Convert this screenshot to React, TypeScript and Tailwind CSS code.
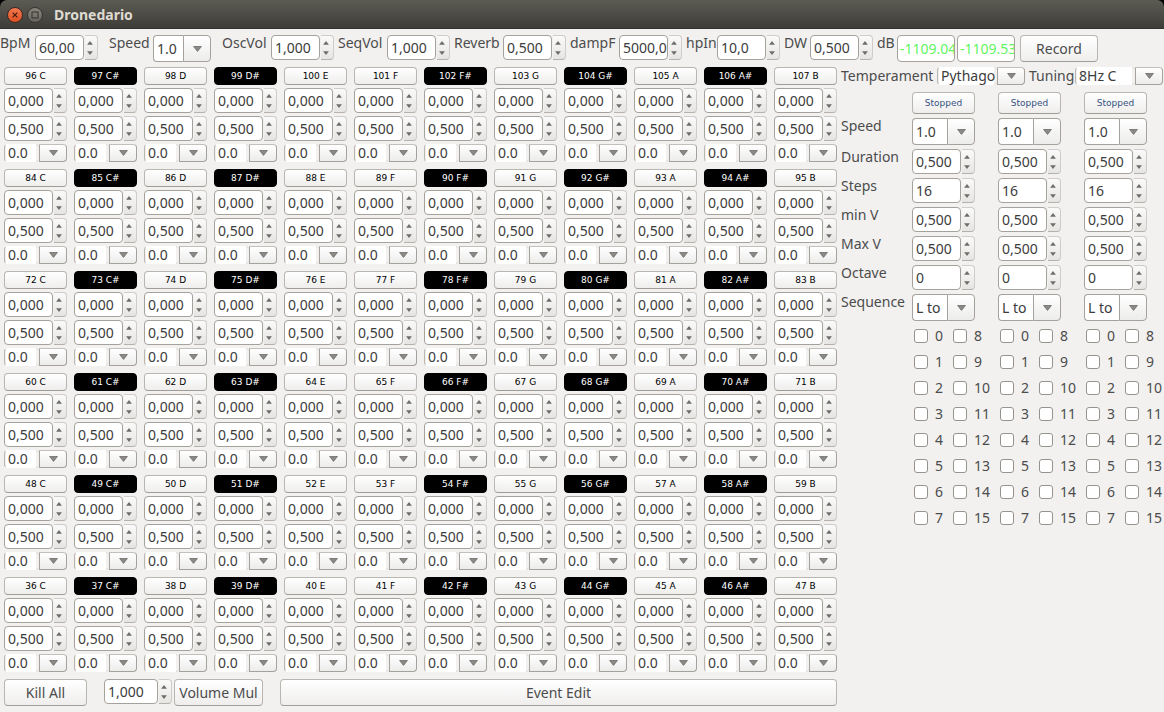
import React, { useId, useState } from "react";
import clsx from "clsx";

const NOTES = ["C", "C#", "D", "D#", "E", "F", "F#", "G", "G#", "A", "A#", "B"];
const OCTAVE_STARTS = [96, 84, 72, 60, 48, 36];
const TRACKS = [1, 2, 3];

function Arrow({ up = false }: { up?: boolean }) {
  return (
    <svg width="6" height="4" viewBox="0 0 6 4" aria-hidden="true">
      <path d={up ? "M3 0 5.9 3.8H0.1Z" : "M0.1 0.2H5.9L3 4Z"} fill="#6f6d6a" />
    </svg>
  );
}

type SpinProps = { value: string; label: string; id?: string; className?: string };

function Spin({ value, label, id, className = "w-full" }: SpinProps) {
  const [text, setText] = useState(value);
  const digits = value.includes(",") ? value.split(",")[1].length : 0;
  const step = digits === 3 ? 0.01 : 1;
  const move = (by: number) => {
    const next = Number(text.replace(",", ".")) + by;
    if (!Number.isNaN(next)) setText(next.toFixed(digits).replace(".", ","));
  };
  return (
    <div className={clsx("flex h-[25px]", className)}>
      <input
        id={id}
        aria-label={id ? undefined : label}
        value={text}
        onChange={(e) => setText(e.target.value)}
        className="h-full w-0 min-w-0 flex-1 rounded-[4px] border border-[#a5a19c] bg-white pl-[3px] text-[#3c3c3c] outline-none focus:border-[#f07746]"
      />
      <div className="ml-px flex w-[13px] shrink-0 flex-col rounded-r-[4px] border border-l-0 border-[#cfccc9] border-b-[#b5b1ad] bg-linear-to-b from-[#fafafa] to-[#e6e5e3]">
        <button type="button" aria-label={`Increase ${label}`} onClick={() => move(step)} className="flex flex-1 items-center justify-center pt-[2px] pr-[2px]">
          <Arrow up />
        </button>
        <button type="button" aria-label={`Decrease ${label}`} onClick={() => move(-step)} className="flex flex-1 items-center justify-center pr-[2px] pb-px">
          <Arrow />
        </button>
      </div>
    </div>
  );
}

type ComboProps = { options: string[]; label: string; id?: string; small?: boolean; className?: string };

function Combo({ options, label, id, small = false, className = "w-full" }: ComboProps) {
  return (
    <div className={clsx("grid", small ? "h-[18px]" : "h-[27px]", className)}>
      <div className="col-start-1 row-start-1 flex min-w-0">
        {small ? (
          <div className="flex min-w-0 flex-1 rounded-[4px] border border-[#b9b6b2] border-y-[#dedbd8] border-r-0">
            <div className="-my-px ml-px mr-[3px] flex-1 bg-white" />
          </div>
        ) : (
          <div className="min-w-0 flex-1 rounded-l-[4px] border border-r-0 border-[#a5a19c] bg-white" />
        )}
        <div
          className={clsx(
            "flex w-7 shrink-0 items-center justify-center border border-[#a5a19c] bg-linear-to-b from-white to-[#ececeb]",
            small ? "rounded-r-[4px] border-t-[#c3c0bc]" : "rounded-r-[4px]"
          )}
        >
          <svg width="9" height="6" viewBox="0 0 9 6" aria-hidden="true">
            <path d="M0.6 0.5H8.4L4.5 5.4Z" fill="#8b8986" stroke="#6e6c69" strokeWidth="0.8" />
          </svg>
        </div>
      </div>
      <select
        id={id}
        aria-label={id ? undefined : label}
        className={clsx(
          "z-10 col-start-1 row-start-1 h-full w-full min-w-0 appearance-none bg-transparent pr-7 pl-1 text-[#3c3c3c] outline-none",
          small ? "leading-[18px]" : "leading-[25px]"
        )}
      >
        {options.map((o) => (
          <option key={o}>{o}</option>
        ))}
      </select>
    </div>
  );
}

function PushButton({ className, children }: { className: string; children: React.ReactNode }) {
  return (
    <button
      type="button"
      className={clsx(
        "rounded-[4px] border border-[#b9b6b2] border-b-[#a09c97] bg-linear-to-b from-white to-[#efeeed] whitespace-nowrap active:from-[#e4e3e1]",
        className
      )}
    >
      {children}
    </button>
  );
}

type FieldProps = { label: string; labelClass: string; children: (id: string) => React.ReactNode };

function Field({ label, labelClass, children }: FieldProps) {
  const id = useId();
  return (
    <div className="flex shrink-0 items-start">
      <label htmlFor={id} className={clsx("shrink-0 leading-5 whitespace-nowrap", labelClass)}>
        {label}
      </label>
      <div className="pt-[2px]">{children(id)}</div>
    </div>
  );
}

function Meter({ value, label, id }: { value: string; label: string; id?: string }) {
  return (
    <input
      id={id}
      readOnly
      aria-label={id ? undefined : label}
      value={value}
      className="block h-[27px] w-[58px] rounded-[4px] border border-[#a5a19c] bg-white pl-[2px] text-[#62f562] outline-none"
    />
  );
}

function Toolbar() {
  return (
    <div className="flex items-start pt-1 pb-[5px]">
      <Field label="BpM" labelClass="w-[35px]">{(id) => <Spin id={id} label="BpM" value="60,00" className="w-[63px]" />}</Field>
      <div className="ml-[11px]">
        <Field label="Speed" labelClass="w-11">{(id) => <Combo id={id} label="Speed" options={["1.0", "2.0", "4.0"]} className="w-[58px]" />}</Field>
      </div>
      <div className="ml-[11px] flex gap-1">
        <Field label="OscVol" labelClass="w-[49px]">{(id) => <Spin id={id} label="OscVol" value="1,000" className="w-[63px]" />}</Field>
        <Field label="SeqVol" labelClass="w-[49px]">{(id) => <Spin id={id} label="SeqVol" value="1,000" className="w-[63px]" />}</Field>
        <Field label="Reverb" labelClass="w-[49px]">{(id) => <Spin id={id} label="Reverb" value="0,500" className="w-[63px]" />}</Field>
        <Field label="dampF" labelClass="w-[49px]">{(id) => <Spin id={id} label="dampF" value="5000,0" className="w-[63px]" />}</Field>
        <Field label="hpIn" labelClass="w-[31px]">{(id) => <Spin id={id} label="hpIn" value="10,0" className="w-[63px]" />}</Field>
        <Field label="DW" labelClass="w-[26px]">{(id) => <Spin id={id} label="DW" value="0,500" className="w-[63px]" />}</Field>
        <Field label="dB" labelClass="w-5">{(id) => <Meter id={id} label="dB left" value="-1109.04" />}</Field>
      </div>
      <div className="flex gap-[5px] pt-[2px] pl-[2px]">
        <Meter label="dB right" value="-1109.53" />
        <PushButton className="h-[27px] w-[78px]">Record</PushButton>
      </div>
    </div>
  );
}

function Voice({ number, note }: { number: number; note: string }) {
  const name = `${number} ${note}`;
  const small = "h-[18px] font-['DejaVu_Sans',sans-serif] text-[9px] leading-4";
  return (
    <div className="flex min-w-0 flex-col gap-[3px]">
      {note.includes("#") ? (
        <button type="button" className={clsx(small, "rounded-[4px] border border-black bg-black text-white")}>
          {name}
        </button>
      ) : (
        <PushButton className={clsx(small, "text-black")}>{name}</PushButton>
      )}
      <Spin label={`${name} volume`} value="0,000" />
      <Spin label={`${name} level`} value="0,500" />
      <Combo small label={`${name} detune`} options={["0.0", "0.5", "1.0"]} />
    </div>
  );
}

type RowProps = { label: string; children: (name: string) => React.ReactNode };

function TrackRow({ label, children }: RowProps) {
  const id = useId();
  return (
    <div role="group" aria-labelledby={id} className="flex items-start">
      <span id={id} className="w-[71px] shrink-0 leading-5">
        {label}
      </span>
      <div className="flex gap-[23px] pt-[2px]">
        {TRACKS.map((t) => (
          <div key={t} className="w-[63px]">
            {children(`${label} ${t}`)}
          </div>
        ))}
      </div>
    </div>
  );
}

function StepBox({ step }: { step: number }) {
  return (
    <label className="flex h-[26px] items-center gap-[7px] leading-5">
      <input
        type="checkbox"
        className="size-[14px] shrink-0 appearance-none rounded-[3px] border border-[#96928e] bg-white checked:bg-[#f07746]"
      />
      <span>{step}</span>
    </label>
  );
}

function Sequencer() {
  return (
    <section className="w-[323px] shrink-0">
      <div className="flex h-[18px] items-center gap-1">
        <div className="flex items-center">
          <label htmlFor="temperament" className="w-24 leading-[18px]">Temperament</label>
          <Combo small id="temperament" label="Temperament" options={["Pythago", "Equal"]} className="w-[88px]" />
        </div>
        <div className="flex items-center">
          <label htmlFor="tuning" className="w-[46px] leading-[18px]">Tuning</label>
          <Combo small id="tuning" label="Tuning" options={["8Hz C", "440Hz A"]} className="w-[88px]" />
        </div>
      </div>
      <div className="mt-[7px] mb-[2px] flex gap-[23px] pl-[71px]">
        {TRACKS.map((t) => (
          <PushButton key={t} className="h-[22px] w-[63px] font-['DejaVu_Sans',sans-serif] text-[9px] leading-5 text-[#35517f]">
            Stopped
          </PushButton>
        ))}
      </div>
      <div className="flex flex-col gap-[2px]">
        <TrackRow label="Speed">{(n) => <Combo label={n} options={["1.0", "2.0", "4.0"]} />}</TrackRow>
        <TrackRow label="Duration">{(n) => <Spin label={n} value="0,500" />}</TrackRow>
        <TrackRow label="Steps">{(n) => <Spin label={n} value="16" />}</TrackRow>
        <TrackRow label="min V">{(n) => <Spin label={n} value="0,500" />}</TrackRow>
        <TrackRow label="Max V">{(n) => <Spin label={n} value="0,500" />}</TrackRow>
        <TrackRow label="Octave">{(n) => <Spin label={n} value="0" />}</TrackRow>
        <TrackRow label="Sequence">{(n) => <Combo label={n} options={["L to", "R to"]} />}</TrackRow>
      </div>
      <div className="mt-[2px] flex gap-2 pl-[73px]">
        {TRACKS.map((t) => (
          <fieldset key={t} aria-label={`Steps of track ${t}`} className="grid w-[78px] grid-flow-col grid-cols-2 grid-rows-8">
            {Array.from({ length: 16 }, (_, i) => (
              <StepBox key={i} step={i} />
            ))}
          </fieldset>
        ))}
      </div>
    </section>
  );
}

export default function App() {
  return (
    <div className="flex min-h-screen min-w-[1164px] flex-col bg-black font-['Noto_Sans',sans-serif] text-[14px] text-[#4c4c4c]">
      <header className="flex h-[29px] items-center gap-1 rounded-t-[7px] border-b border-[#33322e] bg-linear-to-b from-[#5c5b53] to-[#3e3d38] pt-[2px] pl-[7px]">
        <button type="button" aria-label="Close" className="flex size-4 items-center justify-center rounded-full border border-[#3a2a22] bg-linear-to-b from-[#f4784f] to-[#e0501f]">
          <svg width="6" height="6" viewBox="0 0 6 6" aria-hidden="true">
            <path d="M0.6 0.6 5.4 5.4M5.4 0.6 0.6 5.4" stroke="#4a2012" strokeWidth="1.3" />
          </svg>
        </button>
        <button type="button" aria-label="Maximize" className="flex size-4 items-center justify-center rounded-full border border-[#35342f] bg-linear-to-b from-[#87857b] to-[#66645c]">
          <svg width="8" height="8" viewBox="0 0 8 8" aria-hidden="true">
            <rect x="1" y="1" width="6" height="6" fill="none" stroke="#3a3934" strokeWidth="1.1" />
          </svg>
        </button>
        <h1 className="ml-[7px] text-[14px] leading-5 font-bold text-[#dfdbd2]">Dronedario</h1>
      </header>
      <main className="flex-1 bg-[#f2f1f0] pb-[6px]">
        <Toolbar />
        <div className="flex items-start">
          <section className="min-w-0 flex-1 px-1">
            <div className="grid grid-cols-12 gap-[7px]">
              {OCTAVE_STARTS.flatMap((start) =>
                NOTES.map((note, i) => <Voice key={start + i} number={start + i} note={note} />)
              )}
            </div>
            <div className="mt-[7px] flex items-start">
              <PushButton className="h-[27px] w-[83px]">Kill All</PushButton>
              <Spin label="Volume multiplier" value="1,000" className="ml-[17px] w-[68px]" />
              <PushButton className="ml-[2px] h-[27px] w-[89px]">Volume Mul</PushButton>
              <PushButton className="ml-[17px] h-[27px] flex-1">Event Edit</PushButton>
            </div>
          </section>
          <Sequencer />
        </div>
      </main>
    </div>
  );
}
